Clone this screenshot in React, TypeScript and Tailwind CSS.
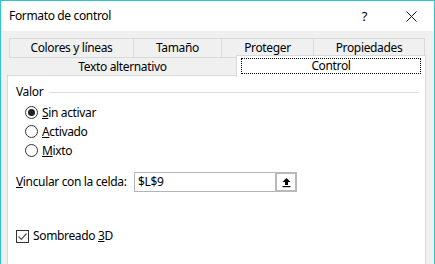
import React from "react";

const font = "font-['Segoe_UI','Noto_Sans',sans-serif] text-[12px] leading-[16px] tracking-[-0.35px] text-black whitespace-nowrap";

const Radio: React.FC<{ checked?: boolean; label: React.ReactNode }> = ({ checked, label }) => (
  <div className="flex items-center h-[19px] pl-[9px]">
    <span className="w-[13px] h-[13px] rounded-full border border-[#333] bg-white flex items-center justify-center">
      {checked && <span className="w-[7px] h-[7px] rounded-full bg-[#222]" />}
    </span>
    <span className="ml-[4px]">{label}</span>
  </div>
);

const App: React.FC = () => {
  return (
    <div className={`w-[435px] h-[264px] flex flex-col border-t border-l border-r border-[#2fc4ce] overflow-hidden ${font}`}>
      {/* Title bar */}
      <div className="h-[30px] bg-white flex items-center shrink-0">
        <span className="ml-[8px] text-[12px]">Formato de control</span>
        <span className="ml-auto mr-[39px] text-[13px]">?</span>
        <svg width="11" height="11" viewBox="0 0 11 11" className="mr-[17px]">
          <path d="M0.5 0.5 L10.5 10.5 M10.5 0.5 L0.5 10.5" stroke="#111" strokeWidth="1" />
        </svg>
      </div>

      {/* Body */}
      <div className="flex-1 bg-[#f0f0f0] pt-[7px] pl-[6px] pr-[8px] flex flex-col">
        {/* back tab row */}
        <div className="flex h-[19px] ml-[2px] mr-[1px] border-t border-l border-r border-[#d9d9d9]">
          <div className="w-[124px] border-r border-[#d9d9d9] flex items-center justify-center">Colores y líneas</div>
          <div className="w-[88px] border-r border-[#d9d9d9] flex items-center justify-center">Tamaño</div>
          <div className="w-[92px] border-r border-[#d9d9d9] flex items-center justify-center">Proteger</div>
          <div className="flex-1 flex items-center justify-center">Propiedades</div>
        </div>

        {/* front tab row */}
        <div className="flex h-[19px] border-t border-[#d9d9d9] ml-[2px]">
          <div className="w-[229px] flex items-center justify-center -ml-[2px] pl-[2px]">Texto alternativo</div>
          <div className="relative z-10 flex-1 -mt-[3px] h-[22px] bg-white border-t border-l border-r border-[#d9d9d9] px-[4px] pt-[2px]">
            <div className="h-[16px] border border-dotted border-black flex items-center justify-center">Control</div>
          </div>
        </div>

        {/* panel */}
        <div className="flex-1 bg-white border-l border-r border-t border-[#d9d9d9] -mt-px pl-[8px] pt-[8px]">
          <div className="flex items-center h-[16px]">
            <span>Valor</span>
            <span className="flex-1 h-px bg-[#dcdcdc] ml-[6px] mr-[6px]" />
          </div>
          <div className="mt-[3px]">
            <Radio checked label={<><span className="underline">S</span>in activar</>} />
            <Radio label={<><span className="underline">A</span>ctivado</>} />
            <Radio label={<><span className="underline">M</span>ixto</>} />
          </div>

          <div className="flex items-center mt-[12px] h-[20px]">
            <span className="w-[118px]"><span className="underline">V</span>incular con la celda:</span>
            <div className="w-[163px] h-[20px] border border-[#b4b4b4] bg-white flex items-center">
              <span className="ml-[3px] flex-1">$L$9</span>
              <div className="w-[22px] h-[20px] -mr-px border-[2px] border-[#b8b8b8] bg-white flex items-center justify-center">
                <svg width="11" height="11" viewBox="0 0 11 11">
                  <path d="M5.5 1 L1.5 5 H4 V8 H7 V5 H9.5 Z" fill="#000" />
                  <rect x="1.5" y="9" width="8" height="1.2" fill="#000" />
                </svg>
              </div>
            </div>
          </div>

          <div className="flex items-center mt-[37px] h-[14px]">
            <span className="w-[13px] h-[13px] border border-[#333] bg-white flex items-center justify-center">
              <svg width="11" height="11" viewBox="0 0 11 11">
                <path d="M1.5 5.5 L4.3 8.3 L9.5 2.5" fill="none" stroke="#555" strokeWidth="1.2" />
              </svg>
            </span>
            <span className="ml-[4px]">Sombreado <span className="underline">3</span>D</span>
          </div>
        </div>
      </div>
    </div>
  );
};

export default App;
